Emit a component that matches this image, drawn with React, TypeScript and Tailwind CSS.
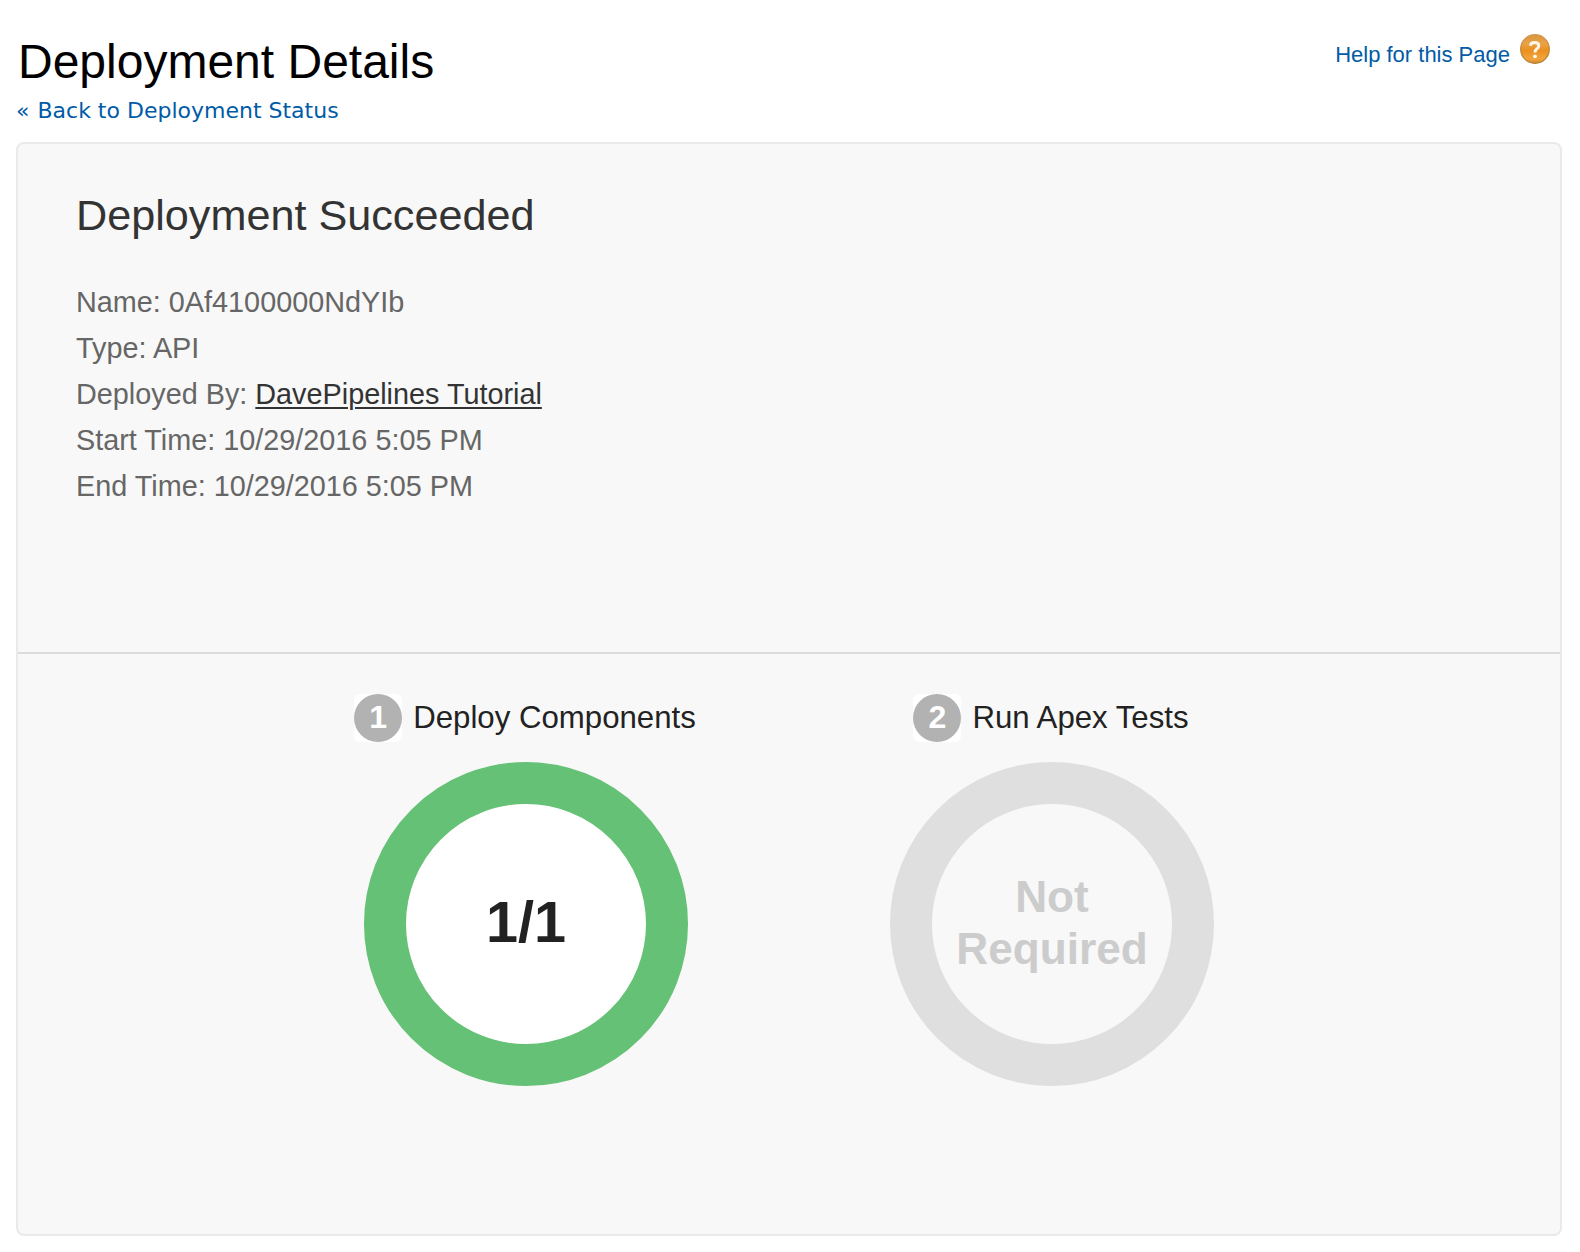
import type { ReactNode } from "react";

const details = [
  { label: "Name", value: "0Af4100000NdYIb" },
  { label: "Type", value: "API" },
  { label: "Deployed By", value: "DavePipelines Tutorial", link: true },
  { label: "Start Time", value: "10/29/2016 5:05 PM" },
  { label: "End Time", value: "10/29/2016 5:05 PM" },
];

function HelpIcon() {
  return (
    <svg viewBox="0 0 30 30" className="w-[30px] h-[30px] -mt-px">
      <defs>
        <linearGradient id="help-fill" x1="0" y1="0" x2="0" y2="1">
          <stop offset="0" stopColor="#d9953f" />
          <stop offset="0.3" stopColor="#e9a347" />
          <stop offset="0.55" stopColor="#ea8f20" />
          <stop offset="0.85" stopColor="#f2a53c" />
          <stop offset="1" stopColor="#d08a30" />
        </linearGradient>
        <linearGradient id="help-rim" x1="0" y1="0" x2="0" y2="1">
          <stop offset="0" stopColor="#d49a50" />
          <stop offset="1" stopColor="#b67a2c" />
        </linearGradient>
      </defs>
      <circle cx="15" cy="15" r="14.3" fill="url(#help-fill)" stroke="url(#help-rim)" strokeWidth="1.3" />
      <path
        d="M10.4 11.7c.3-2.2 1.900-3.200 4.200-3.200 2.600 0 4.200 1.200 4.200 3.200 0 1.700-1 2.500-2.100 3.300-1.200.9-1.700 1.500-1.700 3.600"
        fill="none"
        stroke="#fff6e8"
        strokeWidth="3"
        strokeLinejoin="round"
      />
      <circle cx="15" cy="22.300" r="1.900" fill="#fff6e8" />
    </svg>
  );
}

function Step({ number, title, children }: { number: number; title: string; children: ReactNode }) {
  return (
    <div className="w-[526px] flex flex-col items-center">
      <div className="flex items-center h-12 mb-5 pr-[2px]">
        <div className="w-12 h-12 bg-white rounded-md mr-[11px]">
          <div className="w-12 h-12 rounded-full bg-[#b2b2b2] text-white font-bold text-[32px] leading-[46px] text-center">
            {number}
          </div>
        </div>
        <h3 className="text-[31.2px] leading-12 text-[#222222] whitespace-nowrap">{title}</h3>
      </div>
      {children}
    </div>
  );
}

export default function App() {
  return (
    <div className="w-[1580px] h-[1252px] bg-white pl-4 pr-[18px] pt-[35px] font-['Liberation_Sans',Arial,sans-serif]">
      <header className="flex justify-between h-[107px]">
        <div>
          <h1 className="text-[48px] leading-[54px] text-black pl-[2px]">Deployment Details</h1>
          <a href="#" className="block text-[22px] leading-[44px] text-[#015ba7] font-['DejaVu_Sans',Verdana,sans-serif]">
            <span className="mr-px">«</span> Back to Deployment Status
          </a>
        </div>
        <a href="#" className="flex items-start gap-[10px] pr-3 text-[22px] leading-[40px] text-[#015ba7]">
          Help for this Page
          <HelpIcon />
        </a>
      </header>

      <main className="h-[1094px] bg-[#f8f8f8] border-2 border-[#eaeaea] rounded-lg">
        <section className="h-[510px] border-b-2 border-[#dcdcdc] pl-[58px] pt-[46px]">
          <h2 className="text-[43.2px] leading-[50px] text-[#333333] mb-[39px]">Deployment Succeeded</h2>
          {details.map((item) => (
            <p key={item.label} className="text-[28.8px] leading-[46px] text-[#666666]">
              {item.label}:{" "}
              {item.link ? (
                <a href="#" className="text-[#333333] underline decoration-2 underline-offset-[3px]">
                  {item.value}
                </a>
              ) : (
                item.value
              )}
            </p>
          ))}
        </section>

        <section className="flex justify-center pt-10">
          <Step number={1} title="Deploy Components">
            <div className="w-[324px] h-[324px] rounded-full border-[42px] border-[#65c175] bg-white flex items-center justify-center pb-[2px]">
              <span className="text-[57.6px] leading-none font-bold text-[#222222]">1/1</span>
            </div>
          </Step>
          <Step number={2} title="Run Apex Tests">
            <div className="w-[324px] h-[324px] rounded-full border-[42px] border-[#dfdfdf] flex items-center justify-center pb-[2px]">
              <span className="text-[44.2px] leading-[52px] font-bold text-[#cccccc] text-center">
                Not
                <br />
                Required
              </span>
            </div>
          </Step>
        </section>
      </main>
    </div>
  );
}
